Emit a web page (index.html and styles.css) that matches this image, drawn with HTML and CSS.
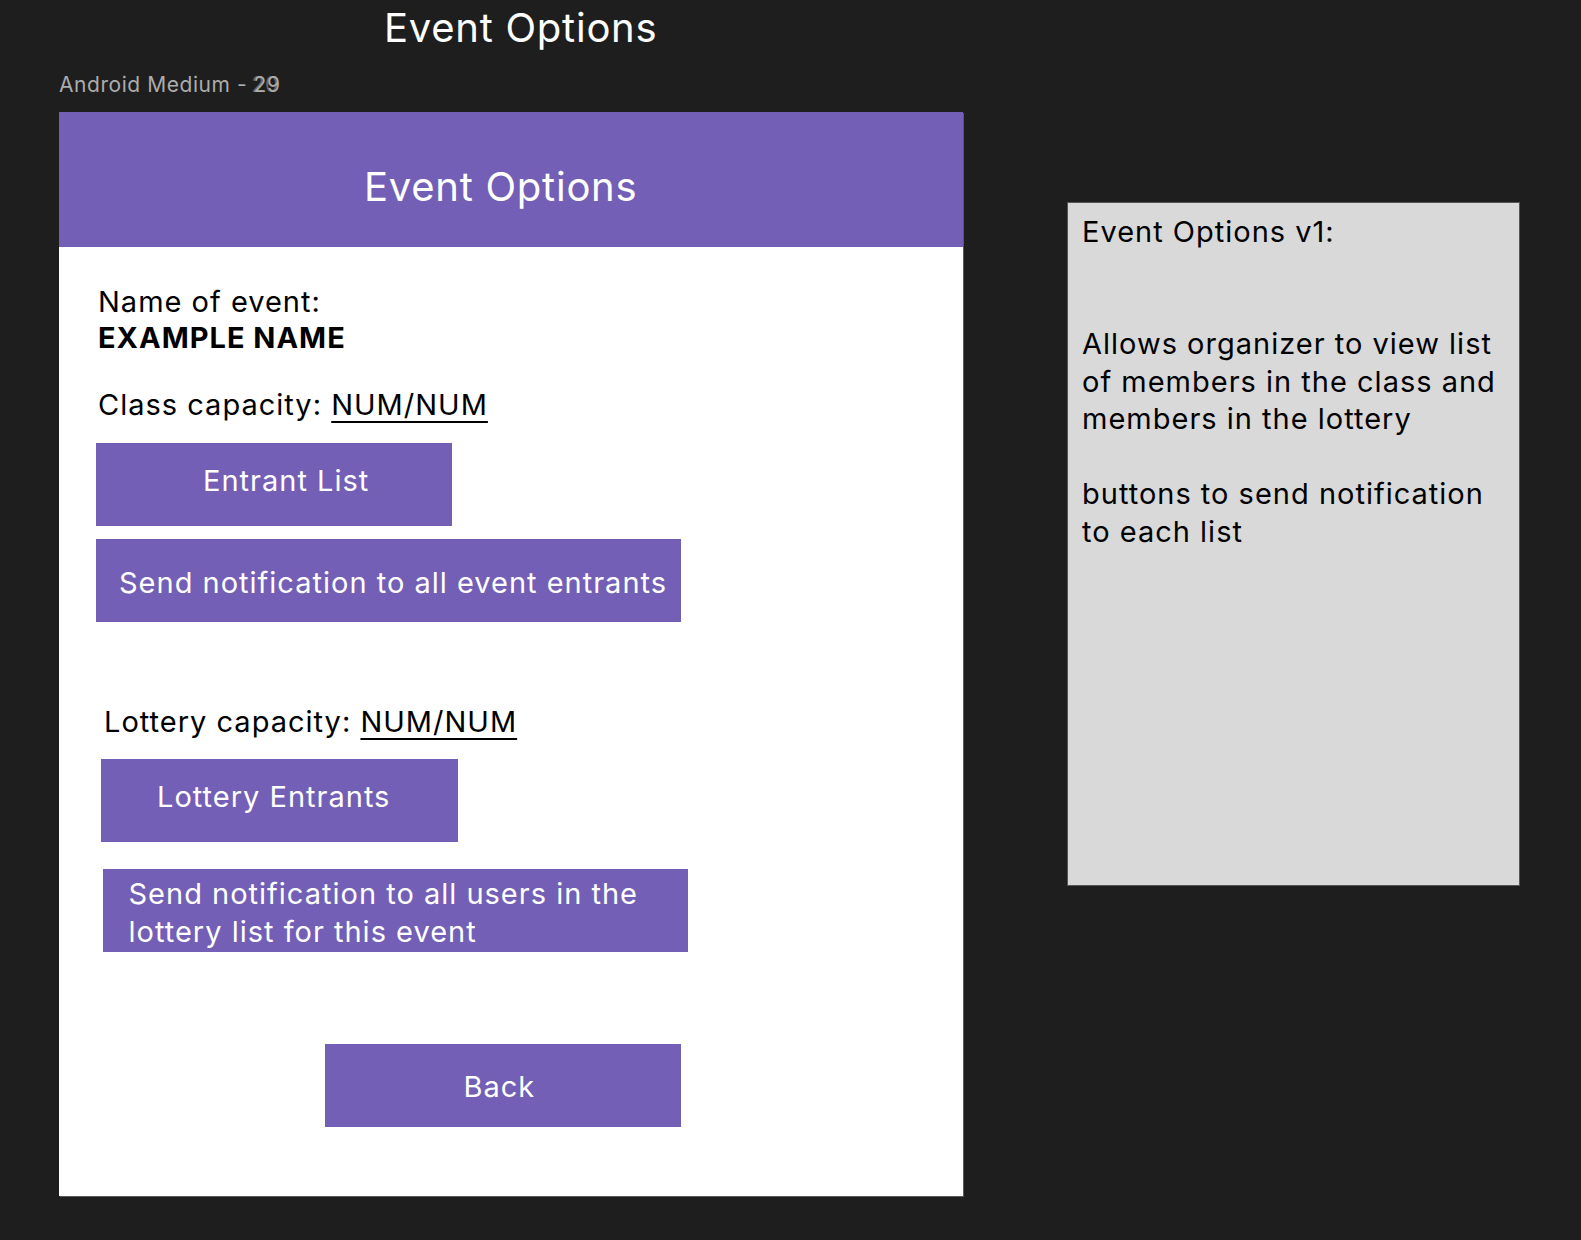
FILE: index.html
```html
<!DOCTYPE html>
<html>
<head>
<meta charset="utf-8">
<link rel="stylesheet" href="styles.css">
</head>
<body>
<div class="canvas">
  <div class="col">
    <h1 class="title">Event Options</h1>
    <div class="frame-label">Android Medium - <span class="num">29<span class="ghost">20</span></span></div>
    <div class="frame">
      <div class="header">Event Options</div>
      <div class="content">
        <p class="name">Name of event:<br><b>EXAMPLE NAME</b></p>
        <p class="cap">Class capacity: <u>NUM/NUM</u></p>
        <div class="btn btn-entrant">Entrant List</div>
        <div class="btn btn-send">Send notification to all event entrants</div>
        <p class="cap cap-lottery">Lottery capacity: <u>NUM/NUM</u></p>
        <div class="btn btn-lottery">Lottery Entrants</div>
        <div class="btn btn-send2">Send notification to all users in the lottery list for this event</div>
        <div class="btn btn-back">Back</div>
      </div>
    </div>
  </div>
  <div class="note">Event Options v1:<br><br><br>Allows organizer to view list of members in the class and members in the lottery<br><br>buttons to send notification to each list</div>
</div>
</body>
</html>
```
FILE: styles.css
```css
html, body {
  margin: 0;
  padding: 0;
  background: #1e1e1e;
  font-family: "Inter", "Noto Sans", sans-serif;
}
.canvas {
  display: flex;
  align-items: flex-start;
  height: 1240px;
  overflow: hidden;
}
.col {
  margin-left: 59px;
  width: 904px;
  flex: none;
}
.title {
  margin: 0;
  padding: 3.5px 0 0 325px;
  font-size: 40px;
  line-height: 48px;
  font-weight: 400;
  letter-spacing: 0.75px;
  color: #ffffff;
}
.frame-label {
  margin-top: 20.5px;
  font-size: 21px;
  line-height: 25px;
  letter-spacing: 0.55px;
  color: #acacac;
}
.num {
  position: relative;
  display: inline-block;
}
.ghost {
  position: absolute;
  left: -2px;
  top: 0;
  opacity: 0.5;
}
.frame {
  margin-top: 15px;
  height: 1084px;
  background: #ffffff;
  box-shadow: 1px 1px 0 #5a5a5a;
}
.header {
  height: 135px;
  box-sizing: border-box;
  background: #735fb6;
  color: #ffffff;
  font-size: 40px;
  line-height: 48px;
  letter-spacing: 0.75px;
  padding: 50.5px 0 0 305px;
}
.content {
  padding: 36.5px 0 0 37px;
  font-size: 29px;
  line-height: 36px;
  letter-spacing: 1px;
  color: #000000;
}
.content p {
  margin: 0;
  padding-left: 2px;
}
.name b {
  font-weight: 700;
}
.cap {
  margin-top: 31px !important;
}
.cap u {
  text-decoration-thickness: 2px;
  text-underline-offset: 6px;
}
.btn {
  box-sizing: border-box;
  height: 83px;
  background: #735fb6;
  color: #ffffff;
  white-space: nowrap;
}
.btn-entrant {
  margin-top: 20.5px;
  width: 356px;
  padding: 19.5px 0 0 107px;
}
.btn-send {
  margin-top: 13px;
  width: 585px;
  padding: 25.5px 0 0 23px;
}
.cap-lottery {
  margin-top: 81.5px !important;
  margin-left: 6px !important;
}
.btn-lottery {
  margin-top: 19.5px;
  margin-left: 5px;
  width: 356.5px;
  padding: 20px 0 0 56px;
}
.btn-send2 {
  margin-top: 27px;
  margin-left: 6.5px;
  width: 585px;
  white-space: normal;
  line-height: 37.5px;
  padding: 6px 40px 0 26px;
}
.btn-back {
  margin-top: 92px;
  margin-left: 228.5px;
  width: 356px;
  padding: 24.5px 0 0 139px;
}
.note {
  flex: none;
  margin-top: 203px;
  margin-left: 105px;
  width: 451px;
  height: 682px;
  box-sizing: border-box;
  background: #d9d9d9;
  box-shadow: 0 0 0 1px #555555;
  padding: 9.7px 10px 0 14px;
  font-size: 29px;
  line-height: 37.5px;
  letter-spacing: 1px;
  color: #000000;
}
```
